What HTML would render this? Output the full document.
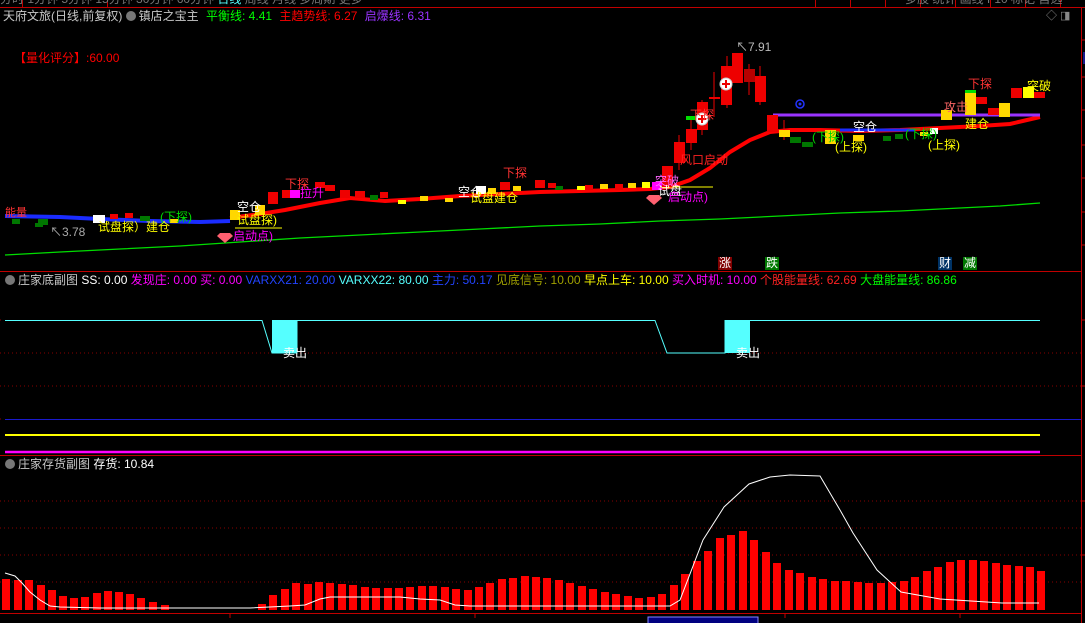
<!DOCTYPE html>
<html><head><meta charset="utf-8"><style>
html,body{margin:0;padding:0;background:#000;width:1085px;height:623px;overflow:hidden}
body{position:relative;font-family:"Liberation Sans","Noto Sans CJK SC",sans-serif;font-size:12px}
.t{position:absolute;white-space:nowrap;line-height:14px}
.ic{display:inline-block;width:10px;height:10px;border-radius:50%;background:#777;vertical-align:-1px;margin-right:3px}
svg{position:absolute;left:0;top:0}
</style></head><body>
<svg width="1085" height="623" viewBox="0 0 1085 623">
<!-- frame lines -->
<line x1="0" y1="7.5" x2="1085" y2="7.5" stroke="#c00000"/>
<line x1="0" y1="271.5" x2="1081" y2="271.5" stroke="#c00000"/>
<line x1="0" y1="455.5" x2="1081" y2="455.5" stroke="#c00000"/>
<line x1="0" y1="613.5" x2="1081" y2="613.5" stroke="#c00000"/>
<line x1="1081.5" y1="8" x2="1081.5" y2="623" stroke="#c00000"/>
<g stroke="#c00000"><line x1="1081" y1="40" x2="1085" y2="40"/><line x1="1081" y1="77" x2="1085" y2="77"/><line x1="1081" y1="110" x2="1085" y2="110"/><line x1="1081" y1="145" x2="1085" y2="145"/><line x1="1081" y1="178" x2="1085" y2="178"/><line x1="1081" y1="212" x2="1085" y2="212"/><line x1="1081" y1="245" x2="1085" y2="245"/>
<line x1="1081" y1="320" x2="1085" y2="320"/><line x1="1081" y1="386" x2="1085" y2="386"/><line x1="1081" y1="501" x2="1085" y2="501"/><line x1="1081" y1="555" x2="1085" y2="555"/>
<line x1="230" y1="613" x2="230" y2="618"/><line x1="475" y1="613" x2="475" y2="618"/><line x1="785" y1="613" x2="785" y2="618"/><line x1="960" y1="613" x2="960" y2="618"/></g>
<g stroke="#c00000"><line x1="107.5" y1="0" x2="107.5" y2="7"/><line x1="22.5" y1="0" x2="22.5" y2="7"/><line x1="955.5" y1="0" x2="955.5" y2="7"/><line x1="990.5" y1="0" x2="990.5" y2="7"/><line x1="1025.5" y1="0" x2="1025.5" y2="7"/><line x1="1060.5" y1="0" x2="1060.5" y2="7"/><line x1="815.5" y1="0" x2="815.5" y2="7"/><line x1="850.5" y1="0" x2="850.5" y2="7"/><line x1="885.5" y1="0" x2="885.5" y2="7"/><line x1="920.5" y1="0" x2="920.5" y2="7"/></g>
<rect x="1083" y="52" width="2" height="12" fill="#1a1a8a"/>

<!-- main chart -->
<polyline fill="none" stroke="#00dd00" stroke-width="1.3" points="5,255 60,252 120,249 180,246 240,242 300,238 360,235 420,232 480,229 540,226 600,224 660,221 720,219 780,216 840,213 900,211 960,208 1000,206 1040,203"/>
<polyline fill="none" stroke="#1a2cff" stroke-width="4" points="5,216 60,217 100,219 150,221 200,222 230,221"/>
<polyline fill="none" stroke="#ff0000" stroke-width="4" points="230,218 260,214 285,210 320,203 350,198 385,201 420,199 460,196 500,194 540,192 580,191 620,190 650,189 670,187 690,180 710,168 730,152 750,140 770,132 790,130 820,130 860,131 900,130 940,128 980,126 1010,124 1040,117"/>
<line x1="773" y1="115" x2="1040" y2="115" stroke="#9933ff" stroke-width="3"/>
<line x1="840" y1="130" x2="915" y2="130" stroke="#1a2cff" stroke-width="3"/>
<!-- left candles -->
<g fill="#ffd700"><rect x="420" y="196" width="8" height="5"/><rect x="488" y="188" width="8" height="6"/><rect x="600" y="184" width="8" height="5"/><rect x="628" y="183" width="8" height="5"/><rect x="230" y="210" width="10" height="10"/><rect x="255" y="205" width="10" height="10"/><rect x="170" y="219" width="8" height="4"/><rect x="445" y="198" width="8" height="4"/><rect x="513" y="186" width="8" height="5"/></g>
<g fill="#ffff00"><rect x="577" y="186" width="8" height="4"/><rect x="398" y="200" width="8" height="4"/><rect x="642" y="182" width="8" height="6"/></g>
<g fill="#007700"><rect x="12" y="219" width="8" height="5"/><rect x="35" y="223" width="8" height="4"/><rect x="38" y="219" width="10" height="6"/><rect x="140" y="216" width="10" height="5"/><rect x="370" y="195" width="8" height="5"/><rect x="555" y="186" width="8" height="4"/></g>
<g fill="#ee0000"><rect x="110" y="214" width="8" height="5"/><rect x="125" y="213" width="8" height="5"/><rect x="268" y="192" width="10" height="12"/><rect x="282" y="190" width="10" height="8"/><rect x="315" y="182" width="10" height="6"/><rect x="325" y="185" width="10" height="6"/><rect x="340" y="190" width="10" height="8"/><rect x="355" y="191" width="10" height="7"/><rect x="380" y="192" width="8" height="6"/><rect x="500" y="182" width="10" height="8"/><rect x="535" y="180" width="10" height="8"/><rect x="548" y="183" width="8" height="5"/><rect x="585" y="185" width="8" height="5"/><rect x="615" y="184" width="8" height="6"/></g>
<rect x="93" y="215" width="12" height="8" fill="#fff"/>
<rect x="476" y="186" width="10" height="8" fill="#fff"/>
<rect x="290" y="190" width="10" height="8" fill="#ff00ff"/>
<rect x="652" y="182" width="10" height="8" fill="#ff00ff"/>
<g stroke="#ffff00"><line x1="235" y1="228" x2="282" y2="228"/><line x1="660" y1="187" x2="713" y2="187"/></g>
<!-- rally candles -->
<g stroke="#ee0000" stroke-width="1"><line x1="679" y1="135" x2="679" y2="170"/><line x1="691" y1="118" x2="691" y2="150"/><line x1="702" y1="100" x2="702" y2="135"/><line x1="714" y1="72" x2="714" y2="117"/><line x1="727" y1="56" x2="727" y2="108"/><line x1="749" y1="64" x2="749" y2="95"/><line x1="760" y1="66" x2="760" y2="105"/><line x1="784" y1="120" x2="784" y2="140"/></g>
<g fill="#ee0000"><rect x="662" y="166" width="11" height="21"/><rect x="674" y="142" width="11" height="21"/><rect x="686" y="129" width="11" height="14"/><rect x="697" y="102" width="11" height="28"/><rect x="709" y="97" width="11" height="2"/><rect x="721" y="66" width="11" height="39"/><rect x="732" y="53" width="11" height="30"/><rect x="755" y="76" width="11" height="26"/><rect x="767" y="115" width="11" height="17"/><rect x="976" y="97" width="11" height="7"/><rect x="988" y="108" width="11" height="7"/><rect x="1011" y="88" width="11" height="10"/><rect x="1034" y="92" width="11" height="6"/></g>
<rect x="744" y="69" width="11" height="13" fill="#b80000"/>
<rect x="686" y="116" width="11" height="4" fill="#00dd00"/>
<g fill="#ffd700"><rect x="779" y="130" width="11" height="7"/><rect x="825" y="130" width="11" height="14"/><rect x="853" y="135" width="11" height="6"/><rect x="941" y="110" width="11" height="10"/><rect x="965" y="93" width="11" height="22"/><rect x="999" y="103" width="11" height="14"/><rect x="920" y="132" width="8" height="4"/></g>
<rect x="965" y="90" width="11" height="3" fill="#00dd00"/>
<rect x="1023" y="87" width="11" height="11" fill="#ffff00"/>
<g fill="#007700"><rect x="790" y="137" width="11" height="6"/><rect x="802" y="142" width="11" height="5"/><rect x="883" y="136" width="8" height="5"/><rect x="895" y="134" width="8" height="5"/></g>
<rect x="930" y="128" width="8" height="6" fill="#fff"/>
<g fill="#fff" stroke="#ccc"><circle cx="726" cy="84" r="6"/><circle cx="702" cy="119" r="6"/></g>
<g stroke="#ee0000" stroke-width="2"><line x1="722" y1="84" x2="730" y2="84"/><line x1="726" y1="80" x2="726" y2="88"/><line x1="698" y1="119" x2="706" y2="119"/><line x1="702" y1="115" x2="702" y2="123"/></g>
<circle cx="800" cy="104" r="4" fill="none" stroke="#2233ff" stroke-width="1.5"/><circle cx="800" cy="104" r="1.5" fill="#2233ff"/>
<path d="M220 233 h10 l3 3 -8 7 -8 -7z" fill="#ff6070"/>
<path d="M649 195 h10 l3 3 -8 7 -8 -7z" fill="#ff6070"/>
<rect x="718" y="257" width="14" height="13" fill="#800000"/>
<rect x="765" y="257" width="14" height="13" fill="#007700"/>
<rect x="938" y="257" width="14" height="13" fill="#003366"/>
<rect x="963" y="257" width="14" height="13" fill="#007700"/>

<!-- panel 2 -->
<g stroke="#880000" stroke-dasharray="1,3"><line x1="0" y1="353" x2="1081" y2="353"/><line x1="0" y1="386" x2="1081" y2="386"/><line x1="0" y1="320" x2="4" y2="320"/><line x1="0" y1="419" x2="4" y2="419"/></g>
<polyline fill="none" stroke="#55ffff" stroke-width="1" points="5,320.5 262,320.5 272,353 297,353 297,320.5 655,320.5 667,353 725,353 725,320.5 758,320.5 1040,320.5"/>
<rect x="272" y="320" width="25" height="33" fill="#55ffff"/>
<rect x="725" y="320" width="25" height="33" fill="#55ffff"/>
<line x1="5" y1="419.5" x2="1081" y2="419.5" stroke="#1a1acc"/>
<line x1="5" y1="435" x2="1040" y2="435" stroke="#ffff00" stroke-width="2"/>
<line x1="5" y1="452" x2="1040" y2="452" stroke="#ff00ff" stroke-width="2.5"/>

<!-- panel 3 -->
<g stroke="#880000" stroke-dasharray="1,3"><line x1="0" y1="501" x2="1081" y2="501"/><line x1="0" y1="528" x2="1081" y2="528"/><line x1="0" y1="555" x2="1081" y2="555"/><line x1="0" y1="582" x2="1081" y2="582"/></g>
<g fill="#ff0000">
<rect x="2" y="579" width="8" height="31"/><rect x="14" y="580" width="8" height="30"/><rect x="25" y="580" width="8" height="30"/><rect x="37" y="585" width="8" height="25"/><rect x="48" y="590" width="8" height="20"/><rect x="59" y="596" width="8" height="14"/><rect x="70" y="598" width="8" height="12"/><rect x="81" y="597" width="8" height="13"/><rect x="93" y="593" width="8" height="17"/><rect x="104" y="591" width="8" height="19"/><rect x="115" y="592" width="8" height="18"/><rect x="126" y="594" width="8" height="16"/><rect x="137" y="598" width="8" height="12"/><rect x="149" y="602" width="8" height="8"/><rect x="161" y="605" width="8" height="5"/>
<rect x="258" y="604" width="8" height="6"/><rect x="269" y="595" width="8" height="15"/><rect x="281" y="589" width="8" height="21"/><rect x="292" y="583" width="8" height="27"/><rect x="304" y="584" width="8" height="26"/><rect x="315" y="582" width="8" height="28"/><rect x="326" y="583" width="8" height="27"/><rect x="338" y="584" width="8" height="26"/><rect x="349" y="585" width="8" height="25"/><rect x="361" y="587" width="8" height="23"/><rect x="372" y="588" width="8" height="22"/><rect x="384" y="588" width="8" height="22"/><rect x="395" y="588" width="8" height="22"/><rect x="406" y="587" width="8" height="23"/><rect x="418" y="586" width="8" height="24"/><rect x="429" y="586" width="8" height="24"/><rect x="441" y="587" width="8" height="23"/><rect x="452" y="589" width="8" height="21"/><rect x="464" y="590" width="8" height="20"/><rect x="475" y="587" width="8" height="23"/><rect x="486" y="583" width="8" height="27"/><rect x="498" y="579" width="8" height="31"/><rect x="509" y="578" width="8" height="32"/><rect x="521" y="576" width="8" height="34"/><rect x="532" y="577" width="8" height="33"/>
<rect x="543" y="578" width="8" height="32"/><rect x="555" y="580" width="8" height="30"/><rect x="566" y="583" width="8" height="27"/><rect x="578" y="586" width="8" height="24"/><rect x="589" y="589" width="8" height="21"/><rect x="601" y="592" width="8" height="18"/><rect x="612" y="594" width="8" height="16"/><rect x="624" y="596" width="8" height="14"/><rect x="635" y="598" width="8" height="12"/><rect x="647" y="597" width="8" height="13"/><rect x="658" y="594" width="8" height="16"/><rect x="670" y="585" width="8" height="25"/><rect x="681" y="574" width="8" height="36"/><rect x="693" y="561" width="8" height="49"/><rect x="704" y="551" width="8" height="59"/><rect x="716" y="538" width="8" height="72"/><rect x="727" y="535" width="8" height="75"/><rect x="739" y="531" width="8" height="79"/><rect x="750" y="540" width="8" height="70"/><rect x="762" y="552" width="8" height="58"/><rect x="773" y="563" width="8" height="47"/><rect x="785" y="570" width="8" height="40"/><rect x="796" y="573" width="8" height="37"/><rect x="808" y="577" width="8" height="33"/><rect x="819" y="579" width="8" height="31"/><rect x="831" y="581" width="8" height="29"/><rect x="842" y="581" width="8" height="29"/><rect x="854" y="582" width="8" height="28"/><rect x="865" y="583" width="8" height="27"/><rect x="877" y="583" width="8" height="27"/><rect x="888" y="582" width="8" height="28"/><rect x="900" y="581" width="8" height="29"/><rect x="911" y="577" width="8" height="33"/><rect x="923" y="571" width="8" height="39"/><rect x="934" y="567" width="8" height="43"/><rect x="946" y="562" width="8" height="48"/><rect x="957" y="560" width="8" height="50"/><rect x="969" y="560" width="8" height="50"/><rect x="980" y="561" width="8" height="49"/><rect x="992" y="563" width="8" height="47"/><rect x="1003" y="565" width="8" height="45"/><rect x="1015" y="566" width="8" height="44"/><rect x="1026" y="567" width="8" height="43"/><rect x="1037" y="571" width="8" height="39"/>
</g>
<polyline fill="none" stroke="#fff" stroke-width="1" points="5,573 15,576 22,583 30,592 40,600 50,606 60,607 100,608 160,608 250,608 290,606 305,605 320,599 330,597 400,597 420,599 440,600 455,605 470,606 520,606 670,606 680,600 703,540 724,507 749,484 770,477 790,475 820,476 840,510 853,533 877,570 901,592 940,599 1002,603 1039,603"/>
<rect x="648" y="617" width="110" height="8" fill="#000080" stroke="#8888ff"/>
</svg>

<div class="t" style="left:0;top:-8px;color:#777">  分时  1分钟  5分钟  15分钟  30分钟  60分钟  <span style="color:#5ff">日线</span>  周线  月线  多周期  更多 </div>
<div class="t" style="left:905px;top:-8px;color:#777">多股  统计  画线  F10  标记  自选</div>
<div class="t" style="left:3px;top:9px;color:#c8c8c8">天府文旅(日线,前复权) <span class="ic"></span>镇店之宝主 <span style="color:#00ff00;margin-left:4px">平衡线: 4.41</span> <span style="color:#ff0000;margin-left:4px">主趋势线: 6.27</span> <span style="color:#9933ff;margin-left:4px">启爆线: 6.31</span></div>
<div class="t" style="left:1046px;top:9px;color:#888;font-size:11px">◇ ◨</div>
<div class="t" style="left:14px;top:51px;color:#ff0000">【量化评分】:60.00</div>

<div class="t" style="left:5px;top:206px;color:#ff3333;font-size:11px">能量</div>
<div class="t" style="left:50px;top:225px;color:#aaa">↖3.78</div>
<div class="t" style="left:98px;top:220px;color:#ffff00">试盘探）建仓</div>
<div class="t" style="left:160px;top:210px;color:#00dd00">(下探)</div>
<div class="t" style="left:237px;top:200px;color:#fff">空仓</div>
<div class="t" style="left:237px;top:213px;color:#ffff00">试盘探)</div>
<div class="t" style="left:233px;top:229px;color:#ff00ff">启动点)</div>
<div class="t" style="left:285px;top:177px;color:#ff3333">下探</div>
<div class="t" style="left:300px;top:186px;color:#ff00ff">拉升</div>
<div class="t" style="left:458px;top:185px;color:#fff">空仓</div>
<div class="t" style="left:470px;top:191px;color:#ffff00">试盘建仓</div>
<div class="t" style="left:503px;top:166px;color:#ff3333">下探</div>
<div class="t" style="left:655px;top:174px;color:#ff66ff">突破</div>
<div class="t" style="left:658px;top:184px;color:#fff">试盘</div>
<div class="t" style="left:668px;top:190px;color:#ff00ff">启动点)</div>
<div class="t" style="left:680px;top:153px;color:#ff2222">风口启动</div>
<div class="t" style="left:690px;top:108px;color:#ff3333">下探</div>
<div class="t" style="left:736px;top:40px;color:#bbb">↖7.91</div>
<div class="t" style="left:853px;top:120px;color:#fff">空仓</div>
<div class="t" style="left:812px;top:130px;color:#00dd00">(下探)</div>
<div class="t" style="left:835px;top:140px;color:#ffff00">(上探)</div>
<div class="t" style="left:905px;top:127px;color:#00dd00">(下探)</div>
<div class="t" style="left:928px;top:138px;color:#ffff00">(上探)</div>
<div class="t" style="left:944px;top:100px;color:#ff6666">攻击</div>
<div class="t" style="left:965px;top:117px;color:#ffff00">建仓</div>
<div class="t" style="left:968px;top:77px;color:#ff3333">下探</div>
<div class="t" style="left:1027px;top:79px;color:#ffff00">突破</div>
<div class="t" style="left:719px;top:256px;color:#fff">涨</div>
<div class="t" style="left:766px;top:256px;color:#fff">跌</div>
<div class="t" style="left:939px;top:256px;color:#fff">财</div>
<div class="t" style="left:964px;top:256px;color:#fff">减</div>

<div class="t" style="left:5px;top:273px;color:#c8c8c8"><span class="ic"></span>庄家底副图 <span style="color:#fff">SS: 0.00</span> <span style="color:#ff00ff">发现庄: 0.00</span> <span style="color:#ff00ff">买: 0.00</span> <span style="color:#2244ff">VARXX21: 20.00</span> <span style="color:#55ffff">VARXX22: 80.00</span> <span style="color:#2244ff">主力: 50.17</span> <span style="color:#a0a000">见底信号: 10.00</span> <span style="color:#ffff00">早点上车: 10.00</span> <span style="color:#ff00ff">买入时机: 10.00</span> <span style="color:#ff2222">个股能量线: 62.69</span> <span style="color:#00ff00">大盘能量线: 86.86</span></div>
<div class="t" style="left:283px;top:346px;color:#fff">卖出</div>
<div class="t" style="left:736px;top:346px;color:#fff">卖出</div>

<div class="t" style="left:5px;top:457px;color:#c8c8c8"><span class="ic"></span>庄家存货副图 <span style="color:#fff">存货: 10.84</span></div>
</body></html>
